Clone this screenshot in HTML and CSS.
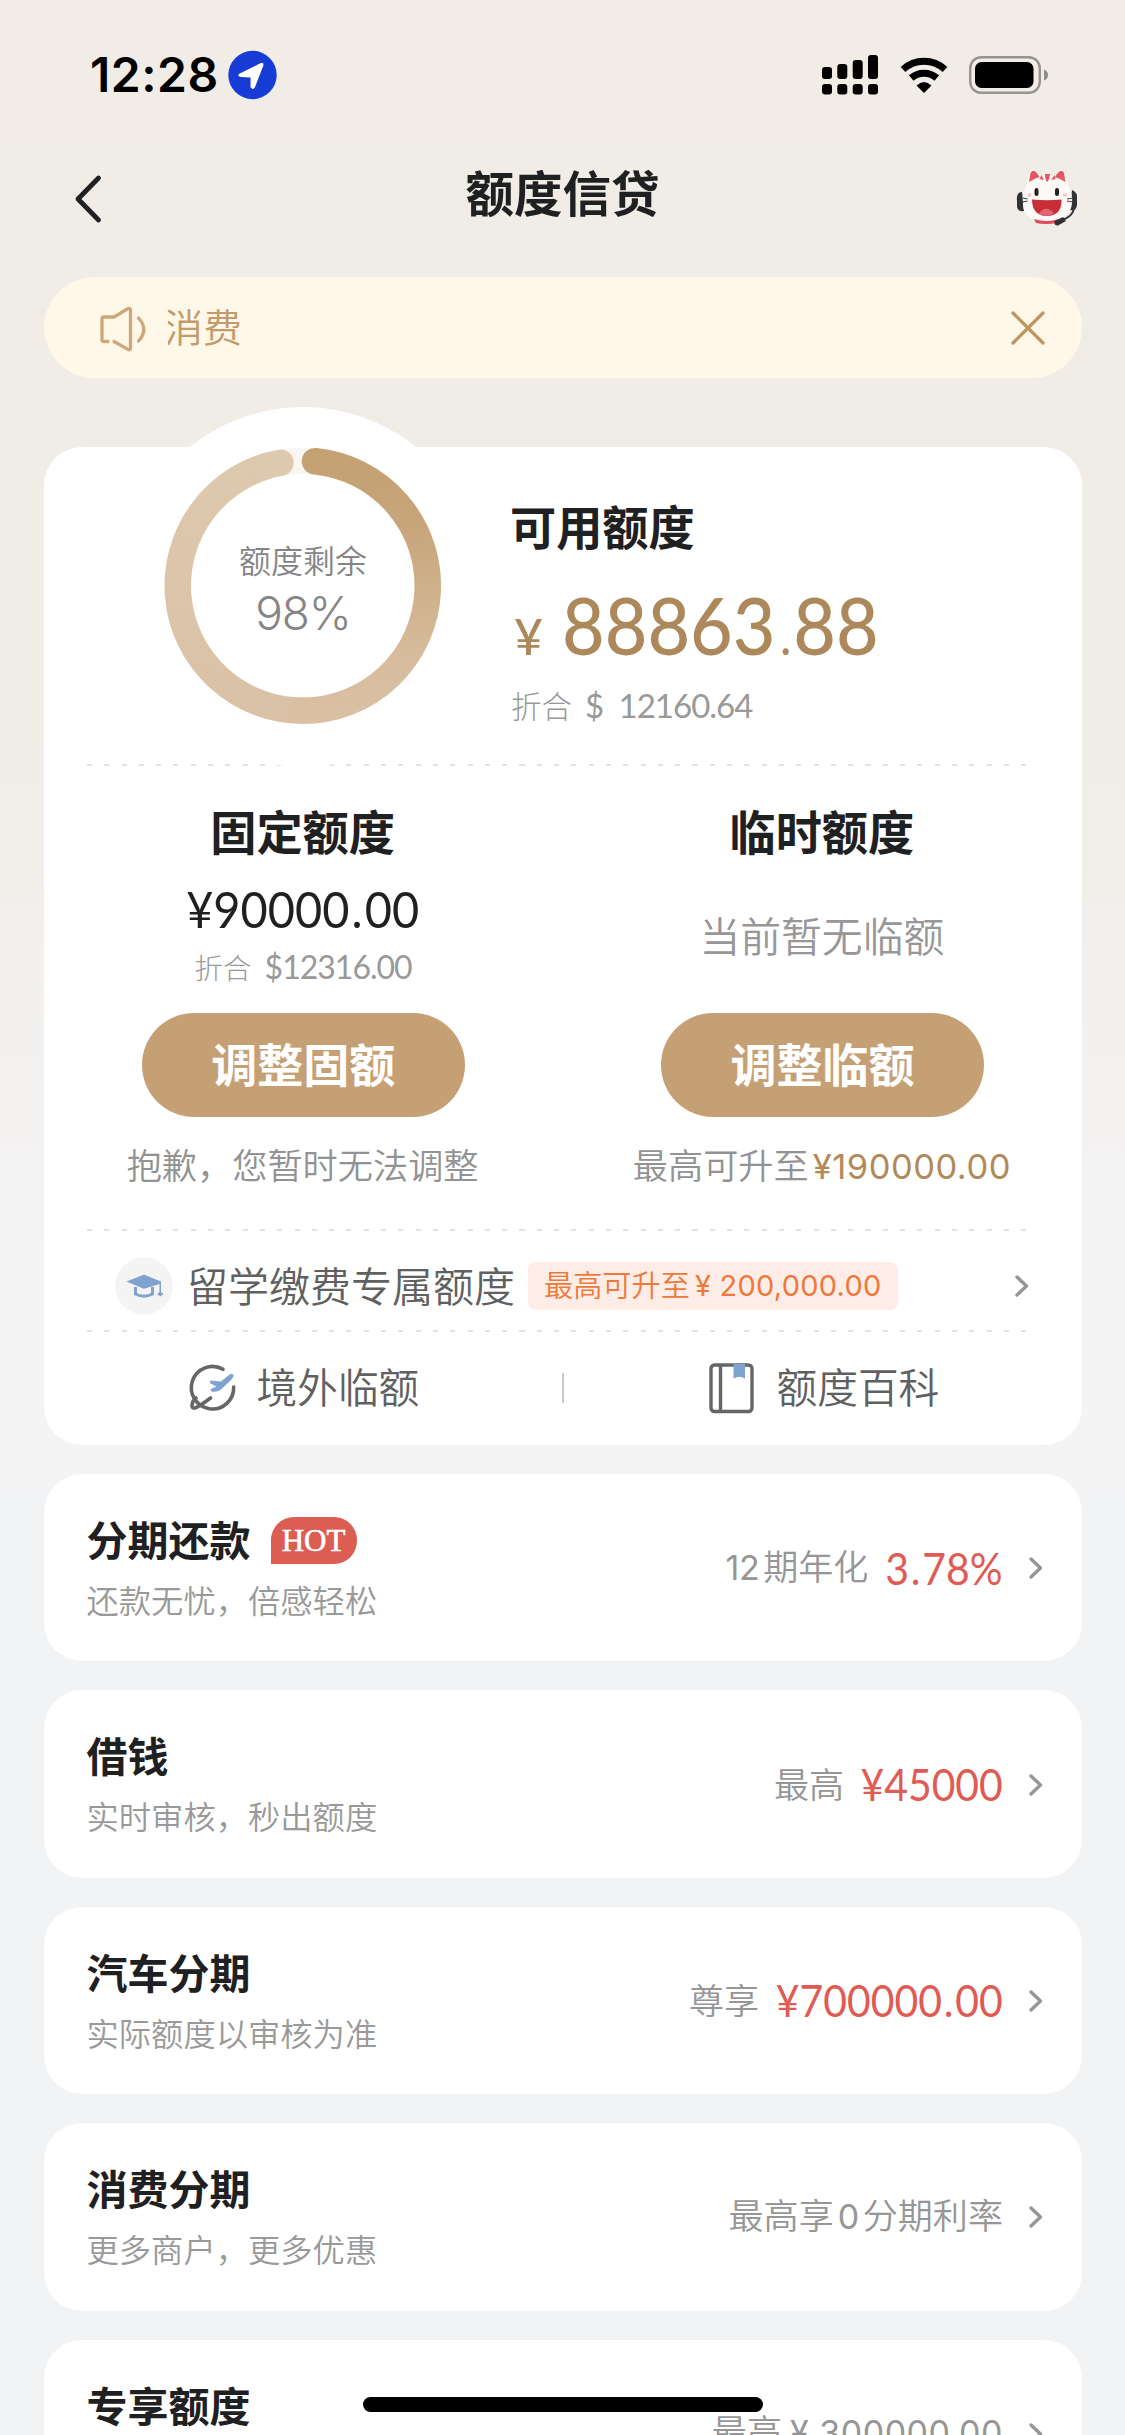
FILE: index.html
```html
<!DOCTYPE html>
<html lang="zh-CN">
<head>
<meta charset="utf-8">
<title>额度信贷</title>
<link rel="stylesheet" href="styles.css">
</head>
<body>
<div class="page">
  <header class="status">
    <span class="time">12:28</span>
    <svg class="loc" viewBox="0 0 50 50"><circle cx="25" cy="25" r="24.7" fill="#173cd6"/><path d="M12 23.500 33 13Q37 11.500 36 15.500L27.500 37.500Q25.500 41 23 37.500V27.500L13 27Q8.500 25.500 12 23.500Z" fill="#fff"/></svg>
    <svg class="signal" viewBox="0 0 56 40"><g fill="#000"><rect y="12" width="10" height="12" rx="3"/><rect x="15.300" y="9" width="10" height="15" rx="3"/><rect x="30.700" y="5" width="10" height="19" rx="3"/><rect x="46" width="10" height="24" rx="3"/><rect y="29" width="10" height="10.500" rx="3"/><rect x="15.300" y="29" width="10" height="10.500" rx="3"/><rect x="30.700" y="29" width="10" height="10.500" rx="3"/><rect x="46" y="29" width="10" height="10.500" rx="3"/></g></svg>
    <svg class="wifi" viewBox="0 0 48 36"><path d="M3 12.500A31 31 0 0 1 45 12.500M11.200 21A19.500 19.500 0 0 1 36.800 21" fill="none" stroke="#000" stroke-width="7"/><path d="M16.500 28.500Q24 21.500 31.500 28.500L24 36Z" fill="#000"/></svg>
    <svg class="battery" viewBox="0 0 80 38"><rect x="1.200" y="1.200" width="69.600" height="35.600" rx="11" fill="none" stroke="#969390" stroke-width="2.400"/><rect x="6" y="6" width="58.500" height="26" rx="6.500"/><path d="M75 13.500Q79 15 79 19T75 24.500Z" fill="#8f8c89"/></svg>
  </header>

  <nav class="nav">
    <svg class="back" viewBox="0 0 26 48"><path d="M23.500 3 3 24 23.500 45" fill="none" stroke="#1f2021" stroke-width="4.800" stroke-linecap="round" stroke-linejoin="round"/></svg>
    <h1>额度信贷</h1>
    <svg class="cat" viewBox="0 0 62 58"><path d="M6 24Q0 24 1 33V39Q2 44 8 43ZM56 22Q62 24 61 32V37Q60 44 54 42Z" fill="#303236"/><path d="M11 16 14 3Q17-1 22 5L26 8H38L42 4Q47-1 49 5L52 17Q57 26 56 35C55 48 44 54 31 54S7 49 7 36Q6 26 11 16Z" fill="#fdf9f7"/><path d="M13 14 14.500 5Q18-1 23.500 9Q17 11 13 14ZM39 9Q45-1 48 5L49.500 14Q45 11 39 9ZM29 6H34Q33 13 31 14Q29 12 29 6ZM23.500 11 25.500 7 28 12ZM38.500 7 39.500 11 35 12Z" fill="#e65464"/><rect x="18.500" y="20" width="4" height="8" rx="2" fill="#222"/><rect x="39" y="20" width="4" height="8" rx="2" fill="#222"/><path d="M16 31.500Q31 33 45.500 31.500Q46 47.500 31 48Q16 47.500 16 31.500Z" fill="#c92d35"/><path d="M22.500 46Q30 36 38 45.500Q30 50 22.500 46Z" fill="#df6672"/><path d="M7 30 11.500 31M7 34 11.500 33M51 31 57 30M51 33 57 34" stroke="#44403f" stroke-width="1.200"/><path d="M12 27H15M47 27H51" stroke="#f7c6c5" stroke-width="3"/><path d="M18 51Q31 55 43 51L41 55Q30 57 20 55Z" fill="#e34b5c"/><path d="M58 41Q56 49 46 52" fill="none" stroke="#303236" stroke-width="1.800"/><path d="M38.500 53 47 49 50 53 42 57.500Q38 58 38.500 53Z" fill="#303236"/></svg>
  </nav>

  <div class="notice">
    <svg class="horn" viewBox="0 0 46 46"><g fill="none" stroke="#cda77a" stroke-width="3.300" stroke-linecap="round" stroke-linejoin="round"><path d="M8 35.500H4Q2 35.500 2 33.500V13Q2 11 4 11H14L27.500 2.800Q30.500 1.500 30.500 4V42Q30.500 45 27.500 43.200L14 35.500M38.500 12Q49 23.500 38.500 35"/></g></svg>
    <span class="notice-text">消费</span>
    <svg class="close" viewBox="0 0 34 34"><path d="M2 2 32 32M32 2 2 32" stroke="#c0935f" stroke-width="3.200" stroke-linecap="round"/></svg>
  </div>

  <main class="card limit">
    <section class="summary">
      <div class="gauge">
        <svg class="gauge-ring" viewBox="0 0 360 360">
          <defs>
            <linearGradient id="right" x1="0" y1="42" x2="0" y2="318" gradientUnits="userSpaceOnUse"><stop offset="0" stop-color="#c4a072"/><stop offset=".3" stop-color="#c8a67b"/><stop offset=".75" stop-color="#d6bc9c"/><stop offset="1" stop-color="#dac1a5"/></linearGradient>
            <linearGradient id="left" x1="0" y1="42" x2="0" y2="318" gradientUnits="userSpaceOnUse"><stop offset="0" stop-color="#dec9af"/><stop offset="1" stop-color="#dac1a5"/></linearGradient>
          </defs>
          <circle cx="180" cy="180" r="180" fill="#fff"/>
          <g transform="translate(0 -1.300)">
            <circle cx="180" cy="180" r="125" fill="none" stroke="#f9f6f1" stroke-width="26"/>
            <g fill="none" stroke-width="26.500" stroke-linecap="round"><path d="M180 305A125 125 0 0 1 157.500 57" stroke="url(#left)"/><path d="M192 55.600A125 125 0 0 1 180 305" stroke="url(#right)"/></g>
          </g>
        </svg>
        <div class="gauge-text"><span>额度剩余</span><b>98%</b></div>
      </div>
      <div class="available">
        <h2>可用额度</h2>
        <p class="balance"><i>¥</i><span class="num">88863<i class="dot">.</i>88</span></p>
        <p class="usd"><span>折合</span><b>$ 12160.64</b></p>
      </div>
    </section>
    <hr>
    <section class="columns">
      <div class="column">
        <h2>固定额度</h2>
        <p class="fixed num">¥90000<i class="dot">.</i>00</p>
        <p class="fixed-usd"><span>折合</span><b>$12316.00</b></p>
        <a class="button">调整固额</a>
        <p class="hint">抱歉，您暂时无法调整</p>
      </div>
      <div class="column">
        <h2>临时额度</h2>
        <p class="none">当前暂无临额</p>
        <a class="button">调整临额</a>
        <p class="hint">最高可升至<b>¥190000.00</b></p>
      </div>
    </section>
    <hr>
    <section class="study">
      <svg class="cap" viewBox="0 0 58 58"><circle cx="29" cy="29" r="28.700" fill="#f4f4f5"/><path d="M11.500 24.500 28 18Q29 17.600 30 18L46 24.500V36L44.500 36V27L30 31.500Q29 31.800 28 31.500Z" fill="#80a2cf"/><path d="M20.500 30V37Q29 41.500 37.500 37V30" fill="none" stroke="#80a2cf" stroke-width="3"/><path d="M45.300 34.500 48.500 37 45.300 39.500 42 37Z" fill="#80a2cf"/></svg>
      <span class="study-title">留学缴费专属额度</span>
      <span class="tag">最高可升至<b>¥ 200,000.00</b></span>
      <svg class="chev" viewBox="0 0 14 22"><path d="M2 2 11.500 11 2 20" fill="none" stroke="#969696" stroke-width="3.400" stroke-linecap="round" stroke-linejoin="round"/></svg>
    </section>
    <hr>
    <section class="links">
      <div class="link">
        <svg viewBox="0 0 50 50"><g fill="none" stroke="#666" stroke-width="3.600" stroke-linecap="round"><path d="M35 6.300A21.200 21.200 0 1 0 45.700 24"/><path d="M22.500 35Q12 43 7.500 44.800Q3.500 46 4 42Q4.500 37.500 8 35"/></g><path d="M22.500 17.500 33 18.500 41.500 11.500Q45 9.500 45.500 12.500Q45.500 14.500 43 17L33 26.500Q29 29.500 23.500 28.500Q21.500 26.500 24 25.500L28.500 23.500 22.500 20.500Q21 18.500 22.500 17.500Z" fill="#80a2cf"/></svg>
        <span>境外临额</span>
      </div>
      <i class="bar"></i>
      <div class="link book">
        <svg viewBox="0 0 50 50"><g fill="none" stroke="#666" stroke-width="3.400"><rect x="3" y="2" width="41" height="46.500" rx="3.500"/><path d="M12.500 2V48"/></g><path d="M25.500 1H37V15.500Q31 12 25.500 15.500Z" fill="#80a2cf"/></svg>
        <span>额度百科</span>
      </div>
    </section>
  </main>

  <ul class="products">
    <li class="card product">
      <div class="name"><h3>分期还款<em>HOT</em></h3><p>还款无忧，倍感轻松</p></div>
      <div class="offer"><span><b>12</b>期年化</span><strong class="num short">3<i class="dot">.</i>78%</strong></div>
      <svg class="chev" viewBox="0 0 14 22"><path d="M2 2 11.500 11 2 20" fill="none" stroke="#969696" stroke-width="3.400" stroke-linecap="round" stroke-linejoin="round"/></svg>
    </li>
    <li class="card product">
      <div class="name"><h3>借钱</h3><p>实时审核，秒出额度</p></div>
      <div class="offer"><span>最高</span><strong class="num medium">¥45000</strong></div>
      <svg class="chev" viewBox="0 0 14 22"><path d="M2 2 11.500 11 2 20" fill="none" stroke="#969696" stroke-width="3.400" stroke-linecap="round" stroke-linejoin="round"/></svg>
    </li>
    <li class="card product">
      <div class="name"><h3>汽车分期</h3><p>实际额度以审核为准</p></div>
      <div class="offer"><span>尊享</span><strong class="num long">¥700000<i class="dot">.</i>00</strong></div>
      <svg class="chev" viewBox="0 0 14 22"><path d="M2 2 11.500 11 2 20" fill="none" stroke="#969696" stroke-width="3.400" stroke-linecap="round" stroke-linejoin="round"/></svg>
    </li>
    <li class="card product">
      <div class="name"><h3>消费分期</h3><p>更多商户，更多优惠</p></div>
      <div class="offer"><span>最高享<b class="zero">0</b>分期利率</span></div>
      <svg class="chev" viewBox="0 0 14 22"><path d="M2 2 11.500 11 2 20" fill="none" stroke="#969696" stroke-width="3.400" stroke-linecap="round" stroke-linejoin="round"/></svg>
    </li>
    <li class="card product">
      <div class="name"><h3>专享额度</h3></div>
      <div class="offer last"><span>最高<b>¥ 300000.00</b></span></div>
      <svg class="chev" viewBox="0 0 14 22"><path d="M2 2 11.500 11 2 20" fill="none" stroke="#969696" stroke-width="3.400" stroke-linecap="round" stroke-linejoin="round"/></svg>
    </li>
  </ul>
  <div class="home"></div>
</div>
</body>
</html>
```
FILE: styles.css
```css
* { box-sizing: border-box; margin: 0; padding: 0; }
body { background: #f2f3f5; }
svg { display: block; flex: none; overflow: visible; }
i, em { font-style: normal; }
b, strong { font-weight: 400; }
.page {
  position: relative;
  width: 1125px;
  height: 2435px;
  overflow: hidden;
  font-family: "Noto Sans CJK SC", sans-serif;
  color: #1f2021;
  white-space: nowrap;
  background: linear-gradient(#f1ece6 0, #f0ece6 700px, #f4f3f3 1200px, #f4f4f4 1470px, #f2f3f5 1500px);
}

/* Amounts are set in a slightly condensed Lato */
.num { display: inline-block; transform: scaleX(.92); transform-origin: left; }
.dot { margin: 0 .045em; }

.status { display: flex; height: 150px; padding: 0 76px 0 90px; align-items: center; color: #000; }
.time { width: 138px; font: 600 48px/60px Inter, sans-serif; letter-spacing: 0.5px; }
.loc { width: 49px; height: 50px; }
.signal { width: 56px; height: 40px; margin-left: auto; }
.wifi { width: 48px; height: 36px; margin-left: 22px; }
.battery { width: 80px; height: 38px; margin-left: 21px; }

.nav { display: flex; height: 127px; padding: 17px 47px 0 75px; justify-content: space-between; align-items: flex-start; }
.back { width: 26px; height: 48px; margin-top: 8px; }
.nav h1 { font-size: 48.500px; line-height: 60px; font-weight: 600; margin: -6px 0 0 8px; }
.cat { width: 62px; height: 58px; margin-top: 1px; }

.notice { display: flex; align-items: center; height: 101px; margin: 0 43px 0 44px; padding: 0 37px 0 56px; border-radius: 51px; background: #fff7e8; }
.horn { width: 46px; height: 46px; margin-top: 2px; }
.notice-text { margin: -5px 0 0 22px; overflow: hidden; font-size: 39px; line-height: 52px; text-indent: -4px; color: #c29a6b; font-weight: 350; }
.close { width: 34px; height: 34px; margin-left: auto; }

.card { background: #fff; border-radius: 38px; }
.limit { margin: 69px 43px 0 43.500px; height: 998px; }
.summary { display: flex; height: 317px; }
.gauge { position: relative; width: 360px; height: 360px; margin: -40px 0 0 79.500px; }
.gauge-ring { width: 360px; height: 360px; }
.gauge-text { position: absolute; inset: 0; display: flex; flex-direction: column; align-items: center; padding-top: 128px; color: #858585; }
.gauge-text span { font-size: 32px; line-height: 48px; font-weight: 350; }
.gauge-text b { font: 350 46px/54px Inter, sans-serif; letter-spacing: -1.200px; margin-top: 3px; }
h2 { font-size: 46.200px; line-height: 60px; font-weight: 600; margin-left: -1px; }
.available { padding: 48px 0 0 28px; }
.balance { display: flex; align-items: baseline; margin-top: 29px; font: 500 80px/80px Lato, sans-serif; color: #ad885a; }
.balance i:first-child { width: 51px; padding-left: 3px; font-size: 50px; line-height: 40px; }
.usd { display: flex; align-items: baseline; gap: 13px; margin-top: 21px; color: #999; font-size: 30.500px; line-height: 40px; font-weight: 300; }
.usd b { font: 400 33px/40px Lato, sans-serif; word-spacing: 8px; letter-spacing: -1px; }
hr { border: 0; height: 2px; margin: 0 53px 0 43px; background: repeating-linear-gradient(90deg, #e2e2e2 0 5px, transparent 5px 17.300px); }

.columns { display: grid; grid-template-columns: 1fr 1fr; height: 462.500px; padding-top: 34px; }
.column { display: flex; flex-direction: column; align-items: center; }
.fixed { margin-top: 23px; font: 400 51px/52px Lato, sans-serif; transform-origin: center; }
.fixed-usd { display: flex; align-items: baseline; gap: 13px; margin-top: 14px; color: #999; font-size: 28.500px; line-height: 36px; font-weight: 300; }
.fixed-usd b { font: 400 32px/36px Lato, sans-serif; letter-spacing: -1px; }
.button { width: 323px; height: 104px; margin-top: 28px; border-radius: 52px; background: #c6a075; color: #fff; font-size: 46px; line-height: 98px; font-weight: 600; text-align: center; }
.none { margin: 50px 0 25px -1px; font-size: 40.800px; line-height: 50px; font-weight: 350; color: #979797; }
.hint { margin: 22px 0 0 -1px; font-size: 35.200px; line-height: 50px; font-weight: 350; color: #929292; }
.hint b { margin-left: 4px; font: 400 34.500px/40px Inter, sans-serif; letter-spacing: .5px; color: #b28a5a; }

.study { display: flex; align-items: center; height: 99px; padding: 12px 53px 0 71.500px; }
.cap { width: 58px; height: 58px; }
.study-title { margin: -5px 0 0 14px; font-size: 41px; line-height: 50px; font-weight: 350; color: #606060; }
.tag { height: 48px; margin-left: 13px; padding: 0 16px; border-radius: 8px; background: #fdede6; color: #ee793c; font-size: 29.200px; line-height: 43px; font-weight: 350; }
.tag b { margin-left: 5px; font: 400 29px/40px Inter, sans-serif; letter-spacing: .25px; }
.chev { width: 14px; height: 22px; margin-left: auto; }

.links { display: flex; height: 113px; padding-left: 144px; align-items: center; }
.link { display: flex; align-items: center; width: 374px; gap: 19px; }
.link svg { width: 50px; height: 50px; }
.link span { margin-top: -5px; font-size: 40.700px; line-height: 50px; font-weight: 350; color: #606060; }
.bar { width: 2px; height: 30px; background: #c7c7c7; }
.book { margin-left: 144px; }

.products { list-style: none; margin: 29px 43px 0 43.500px; display: grid; gap: 29px; }
.product { display: flex; align-items: center; height: 187.400px; padding: 0 39px 0 43px; }
.name { align-self: flex-start; padding-top: 36px; }
h3 { display: flex; align-items: center; height: 56px; font-size: 41px; line-height: 52px; font-weight: 600; }
h3 em { width: 86px; height: 47px; margin: 4px 0 0 20px; border-radius: 23px 23px 23px 0; background: #dc5d51; color: #fff; font: 400 31px/47px "Liberation Serif", serif; -webkit-text-stroke: .6px #fff; text-align: center; }
.name p { margin-top: 11px; font-size: 32.300px; line-height: 44px; font-weight: 350; color: #999; }
.offer { margin: 0 26px 0 auto; display: flex; align-items: center; gap: 17px; color: #969696; font-size: 35.100px; line-height: 56px; font-weight: 350; }
.offer span { margin-top: -3px; }
.product .chev { margin: 1px 0 0; }
.offer b { font-family: Inter, sans-serif; font-size: 34px; letter-spacing: -.5px; margin-right: 4px; }
.offer .zero { margin: 0 4px; }
.offer strong { font: 400 44.500px/56px Lato, sans-serif; color: #df5b54; transform-origin: right; }
.short { margin-left: -10px; }
.medium { margin-left: -13px; }
.long { margin-left: -20px; }
.offer.last b { margin: 0 0 0 8px; letter-spacing: .5px; }
.home { position: absolute; left: 363px; top: 2397px; width: 400px; height: 15px; border-radius: 8px; background: #000; }
```
